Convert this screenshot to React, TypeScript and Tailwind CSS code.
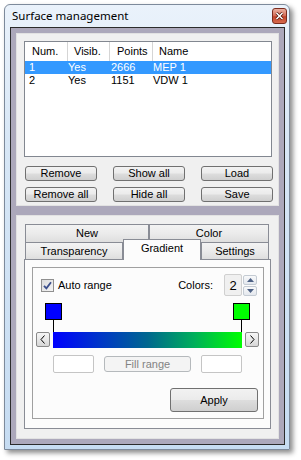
import React from "react";

const btn =
  "flex items-center justify-center rounded-[3px] border border-[#707070] bg-[linear-gradient(#f2f2f2_0%,#ebebeb_48%,#dddddd_52%,#cfcfcf_100%)] leading-none";

const tabOff =
  "flex items-center justify-center border border-b-0 border-[#898c95] bg-[linear-gradient(#f3f3f3_0%,#ebebeb_50%,#dedede_100%)] leading-none";

const rows = [
  { num: "1", vis: "Yes", pts: "2666", name: "MEP 1", sel: true },
  { num: "2", vis: "Yes", pts: "1151", name: "VDW 1", sel: false },
];

function Arrow({ dir }: { dir: "left" | "right" }) {
  return (
    <div className="flex h-[15px] w-[14px] items-center justify-center rounded-[2px] border border-[#8a8a8a] bg-[linear-gradient(#f6f6f6_0%,#e8e8e8_50%,#d6d6d6_100%)]">
      <svg width="6" height="9" viewBox="0 0 6 9">
        <polyline
          points={dir === "left" ? "4.5,0.5 1,4.5 4.5,8.5" : "1.5,0.5 5,4.5 1.5,8.5"}
          fill="none"
          stroke="#000"
          strokeWidth="1"
        />
      </svg>
    </div>
  );
}

function Marker({ color }: { color: string }) {
  return (
    <div className="flex w-[17px] flex-col items-center">
      <div className="h-[17px] w-[17px] border border-black" style={{ backgroundColor: color }} />
      <div className="h-[12px] w-px bg-black" />
    </div>
  );
}

export default function App() {
  return (
    <div className="h-[460px] w-[301px] bg-white pl-[4px] pt-[4px] font-['Liberation_Sans',Arial,sans-serif] text-[11px] text-black">
      <div className="flex h-[446px] w-[286px] flex-col rounded-t-[6px] border border-[#7d8a9b] bg-[linear-gradient(180deg,#eaf2fb_0%,#d8e7f6_30%,#c6dcf2_100%)] shadow-[3px_3px_5px_rgba(0,0,0,0.45)]">
        {/* title bar */}
        <div className="flex h-[22px] justify-between pl-[7px] pr-[2px]">
          <span className="mt-[3px] font-['Noto_Sans',sans-serif] text-[11.5px] leading-[16px]">
            Surface management
          </span>
          <div className="mt-[3px] flex h-[16px] w-[15px] items-center justify-center rounded-[3px] border border-[#7b2c1e] bg-[linear-gradient(#eab1a2_0%,#d8735e_45%,#c2452c_55%,#d66a4d_100%)]">
            <svg width="9" height="8" viewBox="0 0 9 8">
              <path d="M1.5 1 L7.5 7 M7.5 1 L1.5 7" stroke="#4a1208" strokeWidth="3" />
              <path d="M1.5 1 L7.5 7 M7.5 1 L1.5 7" stroke="#fff" strokeWidth="1.6" />
            </svg>
          </div>
        </div>

        {/* client area */}
        <div className="ml-[5px] flex h-[418px] w-[275px] flex-col border border-[#2b2b2b] bg-[#aca8bb] p-[5px]">
          {/* surfaces panel */}
          <div className="h-[173px] border border-[#e2e2e2] bg-[#f0f0f0] pl-[7px] pt-[7px]">
            <div className="h-[116px] w-[248px] border border-[#828790] bg-white">
              <div className="flex h-[19px]">
                <div className="flex w-[43px] items-center border-r border-[#d5d5d5] pl-[7px]">Num.</div>
                <div className="flex w-[42px] items-center border-r border-[#d5d5d5] pl-[6px]">Visib.</div>
                <div className="flex w-[43px] items-center border-r border-[#d5d5d5] pl-[7px]">Points</div>
                <div className="flex items-center pl-[6px]">Name</div>
              </div>
              {rows.map((r) => (
                <div
                  key={r.num}
                  className={`flex h-[13px] items-center leading-none ${r.sel ? "bg-[#3399ff] text-white" : ""}`}
                >
                  <div className="w-[43px] pl-[4px]">{r.num}</div>
                  <div className="w-[42px]">{r.vis}</div>
                  <div className="w-[43px] pl-px">{r.pts}</div>
                  <div>{r.name}</div>
                </div>
              ))}
            </div>
            <div className="ml-px mt-[9px] grid w-[248px] grid-cols-[72px_72px_72px] justify-between gap-y-[6px]">
              <div className={`${btn} h-[15px]`}>Remove</div>
              <div className={`${btn} h-[15px]`}>Show all</div>
              <div className={`${btn} h-[15px]`}>Load</div>
              <div className={`${btn} h-[15px]`}>Remove all</div>
              <div className={`${btn} h-[15px]`}>Hide all</div>
              <div className={`${btn} h-[15px]`}>Save</div>
            </div>
          </div>

          {/* properties panel */}
          <div className="mt-[9px] h-[224px] border border-[#e2e2e2] bg-[#f0f0f0] pl-[7px] pt-[8px]">
            <div className="ml-px flex h-[18px]">
              <div className={`${tabOff} w-[124px]`}>New</div>
              <div className={`${tabOff} w-[120px]`}>Color</div>
            </div>
            <div className="-mt-[3px] ml-px flex h-[20px] items-end">
              <div className={`${tabOff} h-[17px] w-[98px]`}>Transparency</div>
              <div className="relative z-10 -mb-px flex h-[21px] w-[78px] items-start justify-center border border-b-0 border-[#898c95] bg-[#fcfcfc] pt-[3px] leading-none">
                Gradient
              </div>
              <div className={`${tabOff} h-[17px] w-[68px]`}>Settings</div>
            </div>

            <div className="h-[170px] w-[247px] border border-[#898c95] bg-[#fcfcfc] pl-[7px] pt-[7px]">
              <div className="flex h-[152px] w-[232px] flex-col border border-[#a0a0a0]">
                {/* auto range / colors */}
                <div className="mt-[6px] flex h-[22px] items-center justify-between pl-[8px] pr-[6px]">
                  <div className="flex items-center gap-[4px]">
                    <div className="flex h-[13px] w-[13px] items-center justify-center border border-[#8f8f8f] bg-[linear-gradient(135deg,#dcdcdc_0%,#f4f4f4_100%)]">
                      <svg width="9" height="9" viewBox="0 0 9 9">
                        <path d="M1 4.8 L3.4 7.4 L8 1.2" fill="none" stroke="#3c4f8c" strokeWidth="1.8" />
                      </svg>
                    </div>
                    <span>Auto range</span>
                  </div>
                  <div className="flex items-center">
                    <span className="mr-[11px]">Colors:</span>
                    <div className="flex h-[22px] w-[18px] items-center justify-center rounded-[2px] border border-[#d0d0d0] bg-[#f0f0f0] text-[13px] leading-none">
                      2
                    </div>
                    <div className="ml-px flex h-[21px] flex-col justify-between">
                      <div className="flex h-[10px] w-[14px] items-center justify-center rounded-[2px] border border-[#c4cbd3] bg-[linear-gradient(#f8f9fa,#e4e8ee)]">
                        <svg width="7" height="4" viewBox="0 0 7 4">
                          <path d="M0 4 L3.5 0 L7 4 Z" fill="#4d6185" />
                        </svg>
                      </div>
                      <div className="flex h-[10px] w-[14px] items-center justify-center rounded-[2px] border border-[#c4cbd3] bg-[linear-gradient(#f8f9fa,#e4e8ee)]">
                        <svg width="7" height="4" viewBox="0 0 7 4">
                          <path d="M0 0 L3.5 4 L7 0 Z" fill="#4d6185" />
                        </svg>
                      </div>
                    </div>
                  </div>
                </div>

                {/* markers */}
                <div className="ml-[12px] mt-[7px] flex w-[205px] justify-between">
                  <Marker color="#0000ff" />
                  <Marker color="#00ff00" />
                </div>

                {/* gradient bar */}
                <div className="ml-[3px] flex items-start gap-[3px]">
                  <Arrow dir="left" />
                  <div className="h-[16px] w-[189px] bg-[linear-gradient(90deg,#0000ff_0%,#0036c8_25%,#00678f_50%,#00b05a_75%,#00ff00_100%)]" />
                  <Arrow dir="right" />
                </div>

                {/* range inputs */}
                <div className="ml-[20px] mt-[7px] flex items-center">
                  <div className="h-[18px] w-[41px] rounded-[2px] border border-[#c5c5c5] bg-white" />
                  <div className="ml-[10px] flex h-[16px] w-[87px] items-center justify-center rounded-[3px] border border-[#b5b9bc] bg-[#f4f4f4] leading-none text-[#838383]">
                    Fill range
                  </div>
                  <div className="ml-[10px] h-[18px] w-[41px] rounded-[2px] border border-[#c5c5c5] bg-white" />
                </div>

                <div className={`${btn} mr-[5px] mt-[15px] h-[24px] w-[88px] self-end`}>Apply</div>
              </div>
            </div>
          </div>
        </div>
      </div>
    </div>
  );
}
